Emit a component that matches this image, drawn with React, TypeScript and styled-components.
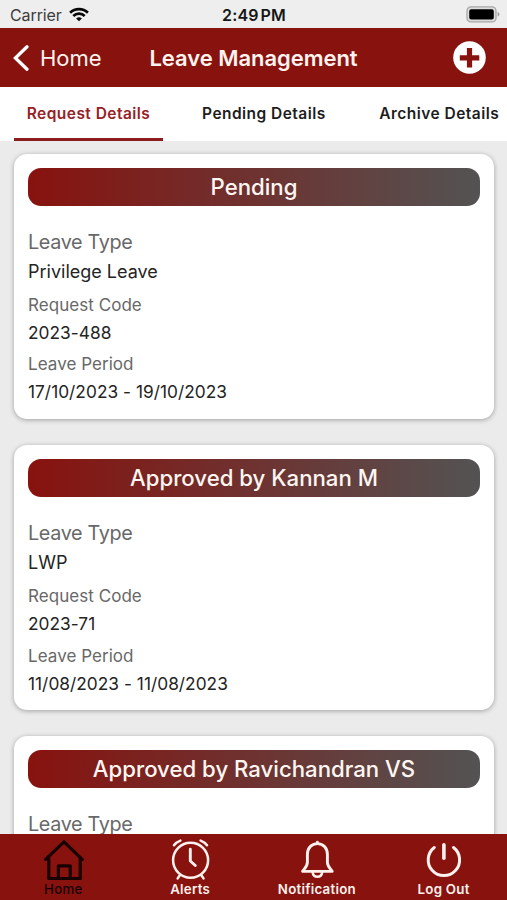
import React from "react";
import styled, { createGlobalStyle } from "styled-components";

const Global = createGlobalStyle`
  * { box-sizing: border-box; }
  body { margin: 0; background: #ebebeb; font-family: Inter, "Liberation Sans", sans-serif; }
`;

const Screen = styled.div`
  display: flex;
  flex-direction: column;
  width: 507px;
  height: 900px;
  overflow: hidden;
  background: #ebebeb;
`;

const StatusBar = styled.div`
  display: grid;
  grid-template-columns: 1fr auto 1fr;
  align-items: center;
  flex: 0 0 28px;
  padding: 2px 7px 0 10px;
  background: #eeeeee;
  color: #161616;
  line-height: 20px;
`;

const Carrier = styled.div`
  display: flex;
  align-items: center;
  gap: 7px;
  font-size: 16px;
  letter-spacing: -0.1px;
  color: #3c3c3c;
  svg { margin-top: -2px; }
`;

const Clock = styled.div`
  margin-right: 2px;
  font-size: 16px;
  font-weight: 600;
  letter-spacing: 0.1px;
  word-spacing: -2px;
`;

const Battery = styled.div`
  display: flex;
  justify-content: flex-end;
  margin-top: -2px;
  svg { display: block; }
`;

const NavBar = styled.header`
  display: grid;
  grid-template-columns: 1fr auto 1fr;
  align-items: center;
  flex: 0 0 59px;
  padding: 0 13px;
  background: #88120e;
  color: #fff3ef;
`;

const Back = styled.div`
  display: flex;
  align-items: center;
  gap: 11px;
  font-size: 22px;
  line-height: 30px;
`;

const Title = styled.h1`
  margin: 0;
  font-size: 22px;
  font-weight: 600;
  line-height: 30px;
  letter-spacing: -0.05px;
`;

const AddIcon = styled.div`
  display: flex;
  justify-content: flex-end;
  padding-right: 8px;
`;

const Tabs = styled.nav`
  display: flex;
  flex: 0 0 54px;
  gap: 26.4px;
  padding-left: 14px;
  background: #fff;
`;

const Tab = styled.div<{ $active?: boolean }>`
  flex: 0 0 149px;
  height: 54px;
  padding-top: 17px;
  border-bottom: 3px solid ${(p) => (p.$active ? "#8c1b1d" : "transparent")};
  color: ${(p) => (p.$active ? "#962125" : "#1d1d1d")};
  font-size: 15.5px;
  font-weight: 600;
  line-height: 20px;
  letter-spacing: 0.46px;
  text-align: center;
  white-space: nowrap;
`;

const List = styled.main`
  flex: 1 1 0;
  min-height: 0;
  display: flex;
  flex-direction: column;
  gap: 26.2px;
  padding: 13px 13.5px 0 14px;
  overflow: hidden;
`;

const Card = styled.article`
  flex: 0 0 265px;
  padding: 14px 13.5px 0 14px;
  border-radius: 13px;
  background: #fff;
  box-shadow: 0 1px 5px rgba(0, 0, 0, 0.32);
`;

const Status = styled.h2`
  height: 38px;
  margin: 0 0 20.6px;
  border-radius: 13px;
  background: linear-gradient(90deg, #88120e, #535353);
  color: #fff6f2;
  font-size: 22.2px;
  font-weight: 550;
  line-height: 37.4px;
  text-align: center;
`;

const TypeLabel = styled.div`
  height: 30.4px;
  color: #686868;
  font-size: 19.8px;
  line-height: 31px;
  letter-spacing: -0.35px;
`;

const TypeValue = styled.div`
  height: 31px;
  margin-bottom: 3px;
  color: #242424;
  font-size: 18px;
  line-height: 30px;
`;

const Label = styled.div`
  height: 28px;
  color: #686868;
  font-size: 17px;
  line-height: 28px;
  letter-spacing: 0.05px;
`;

const Value = styled.div`
  height: 31.4px;
  color: #242424;
  font-size: 17.3px;
  line-height: 27px;
  letter-spacing: 0.03px;
`;

const BottomBar = styled.footer`
  display: grid;
  grid-template-columns: repeat(4, 1fr);
  flex: 0 0 66px;
  padding-top: 4px;
  background: #88120e;
`;

const BottomItem = styled.div<{ $active?: boolean }>`
  display: flex;
  flex-direction: column;
  align-items: center;
  color: ${(p) => (p.$active ? "#190000" : "#fff1ed")};
  font-size: 13.3px;
  font-weight: ${(p) => (p.$active ? 500 : 600)};
  line-height: 17px;
  letter-spacing: 0.25px;
  svg { display: block; margin-bottom: 1px; }
`;

const stroke = { fill: "none", stroke: "currentColor", strokeLinecap: "round", strokeLinejoin: "round" } as const;

const WifiIcon = () => (
  <svg width="20" height="15" viewBox="0 0 20 15" fill="none" stroke="#080808" strokeWidth="2.7">
    <path d="M1.1 5.7a12.7 12.7 0 0 1 17.8 0M4.3 9a8.2 8.2 0 0 1 11.4 0" />
    <path d="M10 14.3 7.1 11.6a4.2 4.2 0 0 1 5.8 0z" fill="#080808" stroke="none" />
  </svg>
);

const BatteryIcon = () => (
  <svg width="34" height="17" viewBox="0 0 34 17">
    <rect x="1" y="0.9" width="29" height="15" rx="4" fill="#dedede" stroke="#a7a7a7" strokeWidth="1.3" />
    <rect x="3.2" y="3.2" width="24.6" height="10.4" rx="2" fill="#000" />
    <path d="M31.7 6q1.6.5 1.6 2.3t-1.6 2.3z" fill="#999" />
  </svg>
);

const ChevronIcon = () => (
  <svg width="16" height="26" viewBox="0 0 16 26">
    <path d="M14 1.8 2.4 13 14 24.2" {...stroke} stroke="#fff" strokeWidth="3.3" strokeLinejoin="miter" />
  </svg>
);

const PlusIcon = () => (
  <svg width="33" height="33" viewBox="0 0 33 33">
    <circle cx="16.5" cy="16.5" r="16.3" fill="#fff" />
    <path d="M16.5 7v19.5M6.8 16.8h19.5" stroke="#88120e" strokeWidth="5.2" />
  </svg>
);

const HomeIcon = () => (
  <svg width="42" height="42" viewBox="0 0 42 42" {...stroke} strokeWidth="3.2">
    <path d="M3.6 21.4 22 3.8l18.2 17.6M6.8 19.5v21h31.4v-21M16.4 40V27.8h11.8V40" />
  </svg>
);

const AlarmIcon = () => (
  <svg width="42" height="42" viewBox="0 0 42 42" {...stroke} strokeWidth="2.5">
    <circle cx="21.6" cy="22.3" r="17.5" />
    <path d="M21.3 11.2V23l5 4.5" strokeWidth="2.9" />
    <path d="M5 7.3Q7.4 4 11.4 2.6M31.6 2.6Q35.6 4 38 7.3M10.8 37.3 8.7 40.4M32.4 37.3l2.1 3.1" />
  </svg>
);

const BellIcon = () => (
  <svg width="42" height="42" viewBox="0 0 42 42" {...stroke} strokeWidth="2.9">
    <path d="M21.4 4.3v1.3c-6.2 0-10 4.7-10 11v7.6c0 4-2.4 5.8-4.8 9.2h29.6c-2.4-3.4-4.8-5.2-4.8-9.2v-7.6c0-6.3-3.8-11-10-11" />
    <path d="M16.7 34.5c.7 5.7 8.7 5.7 9.4 0" strokeWidth="2.5" />
  </svg>
);

const PowerIcon = () => (
  <svg width="42" height="42" viewBox="0 0 42 42" {...stroke} strokeWidth="3">
    <path d="M11.3 9.5a15.7 15.7 0 1 0 19.2 0" />
    <path d="M20.9 6.8v13.5" strokeWidth="3.6" />
  </svg>
);

const requests = [
  { status: "Pending", type: "Privilege Leave", code: "2023-488", period: "17/10/2023 - 19/10/2023" },
  { status: "Approved by Kannan M", type: "LWP", code: "2023-71", period: "11/08/2023 - 11/08/2023" },
  { status: "Approved by Ravichandran VS", type: "", code: "", period: "" },
];

export default function App() {
  return (
    <Screen>
      <Global />
      <StatusBar>
        <Carrier>Carrier <WifiIcon /></Carrier>
        <Clock>2:49 PM</Clock>
        <Battery><BatteryIcon /></Battery>
      </StatusBar>
      <NavBar>
        <Back><ChevronIcon />Home</Back>
        <Title>Leave Management</Title>
        <AddIcon><PlusIcon /></AddIcon>
      </NavBar>
      <Tabs>
        <Tab $active>Request Details</Tab>
        <Tab>Pending Details</Tab>
        <Tab>Archive Details</Tab>
      </Tabs>
      <List>
        {requests.map((r) => (
          <Card key={r.status}>
            <Status>{r.status}</Status>
            <TypeLabel>Leave Type</TypeLabel>
            {r.type && (
              <>
                <TypeValue>{r.type}</TypeValue>
                <Label>Request Code</Label>
                <Value>{r.code}</Value>
                <Label>Leave Period</Label>
                <Value>{r.period}</Value>
              </>
            )}
          </Card>
        ))}
      </List>
      <BottomBar>
        <BottomItem $active><HomeIcon />Home</BottomItem>
        <BottomItem><AlarmIcon />Alerts</BottomItem>
        <BottomItem><BellIcon />Notification</BottomItem>
        <BottomItem><PowerIcon />Log Out</BottomItem>
      </BottomBar>
    </Screen>
  );
}
